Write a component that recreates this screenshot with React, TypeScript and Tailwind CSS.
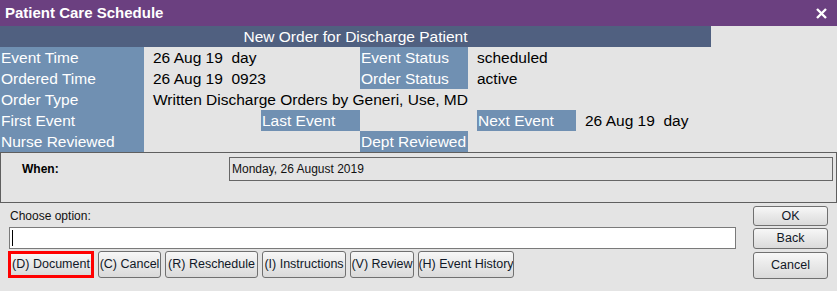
import React from "react";

const label = "bg-[#7090b2] text-white pl-[1px] h-[21px] whitespace-pre";
const value = "text-black pl-[9px] h-[21px] whitespace-pre";

function WinButton({
  children,
  className = "",
}: {
  children: React.ReactNode;
  className?: string;
}) {
  return (
    <button
      className={
        "flex items-center justify-center whitespace-nowrap overflow-hidden rounded-[3px] border border-[#707070] bg-gradient-to-b from-[#f7f7f7] to-[#dadada] text-[12.5px] text-[#111827] leading-none " +
        className
      }
    >
      {children}
    </button>
  );
}

export default function App() {
  return (
    <main
      className="w-[837px] h-[291px] bg-[#e4e4e4] overflow-hidden"
      style={{ fontFamily: '"Liberation Sans", Arial, sans-serif' }}
    >
      {/* title bar */}
      <div className="h-[26px] bg-[#6b4080] flex items-center justify-between pl-[5px] pr-[10px]">
        <span className="text-white font-bold text-[15px]">Patient Care Schedule</span>
        <svg width="11" height="11" viewBox="0 0 11 11">
          <path d="M1 1 L10 10 M10 1 L1 10" stroke="white" strokeWidth="2.4" />
        </svg>
      </div>

      {/* order info */}
      <div className="text-[15.5px] leading-[21px]">
        <div className="w-[711px] h-[21px] bg-[#506080] text-white text-center">
          New Order for Discharge Patient
        </div>

        <div className="flex">
          <div className={label + " w-[144px]"}>Event Time</div>
          <div className={value + " w-[216px]"}>26 Aug 19  day</div>
          <div className={label + " w-[108px]"}>Event Status</div>
          <div className={value}>scheduled</div>
        </div>
        <div className="flex">
          <div className={label + " w-[144px]"}>Ordered Time</div>
          <div className={value + " w-[216px]"}>26 Aug 19  0923</div>
          <div className={label + " w-[108px]"}>Order Status</div>
          <div className={value}>active</div>
        </div>
        <div className="flex">
          <div className={label + " w-[144px]"}>Order Type</div>
          <div className={value}>Written Discharge Orders by Generi, Use, MD</div>
        </div>
        <div className="flex">
          <div className={label + " w-[144px]"}>First Event</div>
          <div className="w-[117px]" />
          <div className={label + " w-[99px]"}>Last Event</div>
          <div className="w-[117px]" />
          <div className={label + " w-[99px]"}>Next Event</div>
          <div className={value}>26 Aug 19  day</div>
        </div>
        <div className="flex">
          <div className={label + " w-[144px]"}>Nurse Reviewed</div>
          <div className="w-[216px]" />
          <div className={label + " w-[108px]"}>Dept Reviewed</div>
        </div>
      </div>

      {/* when panel */}
      <div className="w-[837px] h-[51px] border border-[#5f5f5f] pt-[4px] pr-[3px] flex items-start">
        <div className="pl-[21px] h-[24px] flex items-center text-[12px] font-bold text-black">
          When:
        </div>
        <div className="ml-auto w-[604px] h-[24px] border border-[#666666] flex items-center pl-[2px] text-[12px] text-[#111]">
          Monday, 26 August 2019
        </div>
      </div>

      {/* choose option */}
      <div className="flex">
        <div className="w-[736px] pl-[8px]">
          <div className="h-[24px] pt-[6px] pl-[2px] text-[12px] leading-[14px] text-[#111]">
            Choose option:
          </div>
          <div className="ml-[1px] w-[727px] h-[22px] bg-white border border-[#7a7a7a] flex items-center pl-[2px]">
            <div className="w-[1px] h-[16px] bg-black" />
          </div>
          <div className="flex gap-[4px] mt-[2px]">
            <WinButton className="w-[86px] h-[27px] !border-[3px] !border-[#ff0000] !rounded-none">
              (D) Document
            </WinButton>
            <WinButton className="w-[63px] h-[27px]">(C) Cancel</WinButton>
            <WinButton className="w-[93px] h-[27px]">(R) Reschedule</WinButton>
            <WinButton className="w-[84px] h-[27px]">(I) Instructions</WinButton>
            <WinButton className="w-[64px] h-[27px]">(V) Review</WinButton>
            <WinButton className="w-[96px] h-[27px]">(H) Event History</WinButton>
          </div>
        </div>
        <div className="ml-[17px] pt-[3px] flex flex-col gap-[2px]">
          <WinButton className="w-[75px] h-[20px]">OK</WinButton>
          <WinButton className="w-[75px] h-[21px]">Back</WinButton>
          <WinButton className="w-[75px] h-[27px] mt-[1px]">Cancel</WinButton>
        </div>
      </div>
    </main>
  );
}
